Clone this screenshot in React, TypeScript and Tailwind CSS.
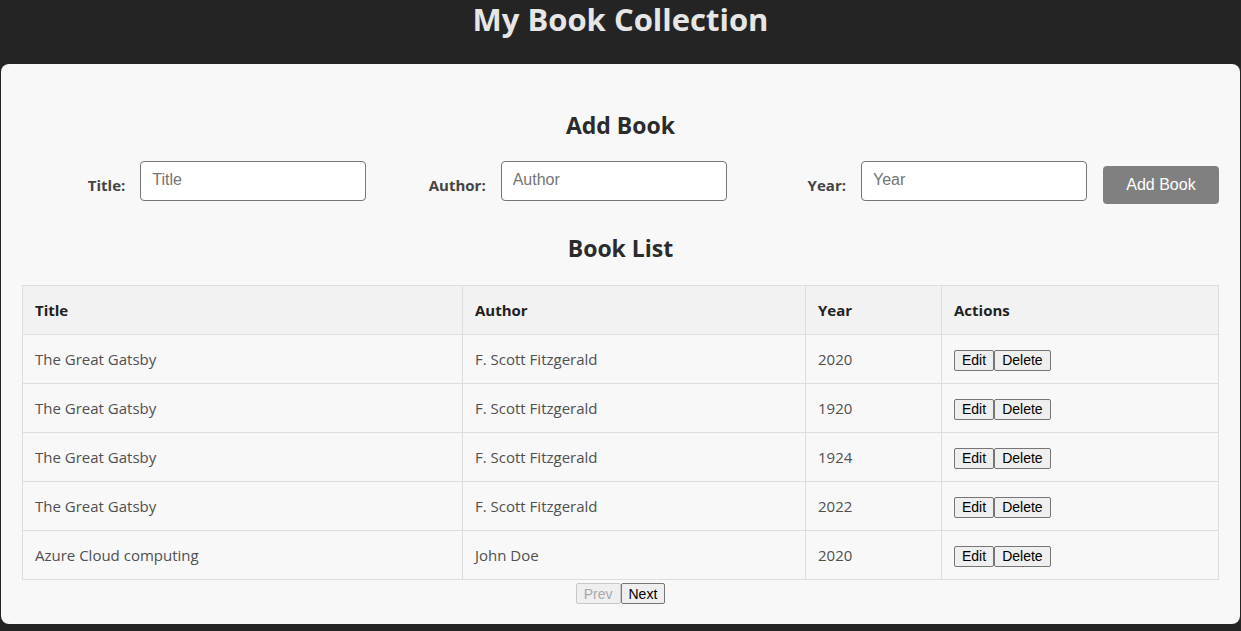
import React from "react";

const books = [
  { title: "The Great Gatsby", author: "F. Scott Fitzgerald", year: "2020" },
  { title: "The Great Gatsby", author: "F. Scott Fitzgerald", year: "1920" },
  { title: "The Great Gatsby", author: "F. Scott Fitzgerald", year: "1924" },
  { title: "The Great Gatsby", author: "F. Scott Fitzgerald", year: "2022" },
  { title: "Azure Cloud computing", author: "John Doe", year: "2020" },
];

function Field({ label, placeholder }: { label: string; placeholder: string }) {
  return (
    <div className="flex-1 flex justify-end items-start gap-[15px]">
      <label className="mt-[13px] text-[15px] font-bold text-[#444]">{label}</label>
      <input
        placeholder={placeholder}
        className="w-[226px] h-[40px] rounded-[4px] border border-[#767676] bg-white px-[11px] pb-[3px] text-[16px] text-[#333] placeholder:text-[#757575] outline-none"
        style={{ fontFamily: "'Liberation Sans', Arial, sans-serif" }}
      />
    </div>
  );
}

export default function App() {
  const btn =
    "h-[21px] border border-[#767676] rounded-[2px] bg-[#efefef] px-[7px] text-[14px] text-black leading-none";
  return (
    <div
      className="min-h-[631px] bg-[#242424] pt-0 px-[1px] pb-[7px]"
      style={{ fontFamily: "'Open Sans', 'Noto Sans', sans-serif" }}
    >
      <div className="h-[64px] flex items-start justify-center">
        <h1 className="text-[31px] font-bold text-[#e6e6e6] leading-none mt-[4px]">My Book Collection</h1>
      </div>
      <div className="rounded-[8px] bg-[#f8f8f8] h-[560px] px-[21px] pt-[47px]">
        <h2 className="text-center text-[23px] font-bold text-[#2b2b2b] leading-[28px]">Add Book</h2>
        <div className="mt-[22px] flex items-start gap-[16px]">
          <Field label="Title:" placeholder="Title" />
          <Field label="Author:" placeholder="Author" />
          <Field label="Year:" placeholder="Year" />
          <button
            className="mt-[5px] w-[116px] h-[38px] rounded-[4px] bg-[#808080] text-white text-[16px]"
            style={{ fontFamily: "'Liberation Sans', Arial, sans-serif" }}
          >
            Add Book
          </button>
        </div>
        <h2 className="mt-[30px] text-center text-[23px] font-bold text-[#2b2b2b] leading-[28px]">Book List</h2>
        <table className="mt-[23px] w-full border-collapse text-[15px]">
          <thead>
            <tr className="bg-[#f2f2f2] h-[49px]">
              <th className="w-[440px] border border-[#dddddd] text-left pl-[12px] font-bold text-[#222]">Title</th>
              <th className="w-[343px] border border-[#dddddd] text-left pl-[12px] font-bold text-[#222]">Author</th>
              <th className="w-[136px] border border-[#dddddd] text-left pl-[12px] font-bold text-[#222]">Year</th>
              <th className="border border-[#dddddd] text-left pl-[12px] font-bold text-[#222]">Actions</th>
            </tr>
          </thead>
          <tbody>
            {books.map((b, i) => (
              <tr key={i} className="h-[49px]">
                <td className="border border-[#dddddd] pl-[12px] text-[#505050]">{b.title}</td>
                <td className="border border-[#dddddd] pl-[12px] text-[#505050]">{b.author}</td>
                <td className="border border-[#dddddd] pl-[12px] text-[#505050]">{b.year}</td>
                <td className="border border-[#dddddd] pl-[12px]">
                  <div className="flex pt-[2px]" style={{ fontFamily: "'Liberation Sans', Arial, sans-serif" }}>
                    <button className={btn}>Edit</button>
                    <button className={btn}>Delete</button>
                  </div>
                </td>
              </tr>
            ))}
          </tbody>
        </table>
        <div className="mt-[3px] flex justify-center" style={{ fontFamily: "'Liberation Sans', Arial, sans-serif" }}>
          <button className="h-[21px] border border-[#c8c8c8] rounded-[2px] bg-[#efefef] px-[7px] text-[14px] text-[#a8a8a8] leading-none">
            Prev
          </button>
          <button className={btn}>Next</button>
        </div>
      </div>
    </div>
  );
}
